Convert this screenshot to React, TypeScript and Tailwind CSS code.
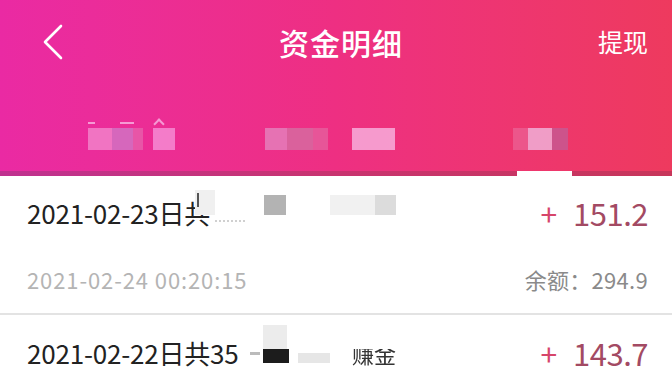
import React from "react";

type Cell = { w: number; c: string; gap?: number };

const tabs: { ml: number; cells: Cell[] }[] = [
  {
    ml: 88,
    cells: [
      { w: 24, c: "bg-[#f27cc6]" },
      { w: 21, c: "bg-[#d46ec0]" },
      { w: 10, c: "bg-[#e85aa8]" },
      { w: 22, c: "bg-[#f585cf]", gap: 10 },
    ],
  },
  {
    ml: 90,
    cells: [
      { w: 22, c: "bg-[#e47ab8]" },
      { w: 26, c: "bg-[#d7679f]" },
      { w: 15, c: "bg-[#e55a9a]" },
      { w: 43, c: "bg-[#f6a6d6]", gap: 24 },
    ],
  },
  {
    ml: 118,
    cells: [
      { w: 15, c: "bg-[#eb5a8e]" },
      { w: 24, c: "bg-[#f0a9d0]" },
      { w: 16, c: "bg-[#c9578f]" },
    ],
  },
];

function Amount({ value }: { value: string }) {
  return (
    <div className="flex items-center leading-[36px] h-[36px]">
      <span className="text-[30px] text-[#d6456a] mr-[16px]">+</span>
      <span className="text-[31px] text-[#a34a63] tracking-[-0.5px]">{value}</span>
    </div>
  );
}

export default function App() {
  return (
    <div className="w-[672px] h-[389px] overflow-hidden bg-white font-['Noto_Sans_CJK_SC',sans-serif]">
      <header className="h-[176px] flex flex-col bg-gradient-to-r from-[#ea2aa3] via-[#ee2f82] to-[#ee3a5e]">
        <div className="h-[84px] flex items-center pl-[42px] pr-[24px]">
          <div className="w-[100px]">
            <svg width="22" height="36" viewBox="0 0 22 36" fill="none">
              <path d="M19 2 L3 18 L19 34" stroke="white" strokeWidth="2.6" strokeLinecap="round" strokeLinejoin="round" />
            </svg>
          </div>
          <div className="flex-1 text-center pr-[8px] text-white text-[30px] font-medium tracking-[1px]">资金明细</div>
          <div className="w-[100px] text-right text-white text-[25px]">提现</div>
        </div>
        <div className="flex-1 flex pt-[44px]">
          {tabs.map((t, i) => (
            <div key={i} className="relative flex h-[22px]" style={{ marginLeft: t.ml }}>
              {t.cells.map((c, j) => (
                <div key={j} className={`h-[22px] opacity-90 ${c.c}`} style={{ width: c.w, marginLeft: c.gap ?? 0 }} />
              ))}
              {i === 0 && (
                <>
                  <div className="absolute left-0 top-[-6px] w-[7px] h-[2px] bg-[#f59ad4]" />
                  <div className="absolute left-[32px] top-[-6px] w-[14px] h-[2px] bg-[#f59ad4]" />
                  <div className="absolute left-[67px] top-[-8px] w-[8px] h-[8px] border-l-2 border-t-2 border-[#f59ad4] rotate-45" />
                </>
              )}
            </div>
          ))}
        </div>
        <div className="h-[5px] flex bg-gradient-to-r from-[#bf3190] via-[#c8336f] to-[#c7365a]">
          <div className="w-[517px]" />
          <div className="w-[55px] bg-white" />
        </div>
      </header>

      <div className="px-[27px] pr-[24px] pt-[19px] pb-[19px]">
        <div className="relative flex justify-between items-center h-[36px]">
          <span className="text-[26px] leading-[36px] text-[#222] tracking-[-0.2px]">2021-02-23日共</span>
          <div className="absolute left-[168px] top-[-5px] w-[20px] h-[25px] bg-[#f0f0f0]" />
          <div className="absolute left-[170px] top-[-2px] w-[2px] h-[14px] bg-[#555]" />
          <div className="absolute left-[188px] top-[23px] w-[30px] h-[4px] border-b-2 border-dotted border-[#d0d0d0]" />
          <div className="absolute left-[237px] top-0 w-[22px] h-[20px] bg-[#b3b3b3]" />
          <div className="absolute left-[303px] top-0 w-[45px] h-[20px] bg-[#f1f1f1]" />
          <div className="absolute left-[348px] top-0 w-[21px] h-[20px] bg-[#dcdcdc]" />
          <Amount value="151.2" />
        </div>
        <div className="mt-[33px] flex justify-between items-center h-[30px] text-[22px] leading-[30px]">
          <span className="text-[#b4b4b4] tracking-[0.9px]">2021-02-24 00:20:15</span>
          <span className="text-[#8a8a8a] tracking-[0.3px]">余额：294.9</span>
        </div>
      </div>

      <div className="h-[2px] bg-[#e3e3e3]" />

      <div className="px-[27px] pr-[24px] pt-[20px]">
        <div className="relative flex justify-between items-center h-[36px]">
          <span className="text-[26px] leading-[36px] text-[#222] tracking-[-0.2px]">2021-02-22日共35</span>
          <div className="absolute left-[223px] top-[17px] w-[10px] h-[3px] bg-[#bbb]" />
          <div className="absolute left-[236px] top-[-10px] w-[24px] h-[24px] bg-[#ececec]" />
          <div className="absolute left-[236px] top-[14px] w-[26px] h-[14px] bg-[#1c1c1c]" />
          <div className="absolute left-[271px] top-[18px] w-[32px] h-[10px] bg-[#e6e6e6]" />
          <span className="absolute left-[325px] top-[4px] text-[22px] leading-[28px] text-[#333] blur-[0.6px]">赚金</span>
          <div className="absolute left-[325px] top-[4px] w-[48px] h-[10px] bg-white" />
          <Amount value="143.7" />
        </div>
      </div>
    </div>
  );
}
